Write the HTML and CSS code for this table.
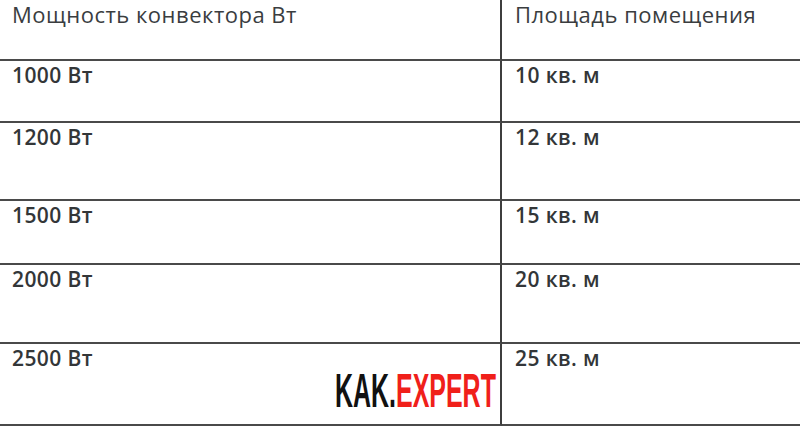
FILE: index.html
```html
<!DOCTYPE html>
<html lang="ru">
<head>
<meta charset="utf-8">
<link rel="stylesheet" href="styles.css">
</head>
<body>
<div class="table">
  <div class="cell head left">Мощность конвектора Вт</div>
  <div class="cell head">Площадь помещения</div>
  <div class="cell left">1000 Вт</div>
  <div class="cell">10 кв. м</div>
  <div class="cell left">1200 Вт</div>
  <div class="cell">12 кв. м</div>
  <div class="cell left">1500 Вт</div>
  <div class="cell">15 кв. м</div>
  <div class="cell left">2000 Вт</div>
  <div class="cell">20 кв. м</div>
  <div class="cell left">2500 Вт</div>
  <div class="cell">25 кв. м</div>
</div>
<div class="logo"><span class="kak">KAK.</span><span class="expert">EXPERT</span></div>
</body>
</html>
```
FILE: styles.css
```css
html, body {
  margin: 0;
  padding: 0;
  background: #ffffff;
}
body {
  width: 800px;
  height: 427px;
  overflow: hidden;
  position: relative;
  font-family: "Open Sans", "Liberation Sans", sans-serif;
  color: #333638;
}
.table {
  display: grid;
  grid-template-columns: 502px 298px;
  grid-template-rows: 61px 62px 78px 64px 79px 82px;
}
.cell {
  border-bottom: 2px solid #4a4a4a;
  padding: 0 0 0 13px;
  font-size: 21px;
  font-weight: 600;
  line-height: 28px;
  letter-spacing: 0.4px;
  box-sizing: border-box;
}
.cell.left {
  border-right: 2px solid #3e3e3e;
  padding-left: 12px;
}
.cell.head {
  font-size: 22px;
  font-weight: 400;
  padding-top: 0;
  letter-spacing: 0.5px;
  color: #3a3d3f;
}
.logo {
  position: absolute;
  left: 335px;
  top: 367px;
  font-family: "Liberation Sans", Arial, sans-serif;
  font-weight: 700;
  font-size: 48px;
  line-height: 48px;
  transform: scaleX(0.52);
  transform-origin: left top;
  white-space: nowrap;
}
.kak { color: #111111; }
.expert { color: #f0201a; }
```
